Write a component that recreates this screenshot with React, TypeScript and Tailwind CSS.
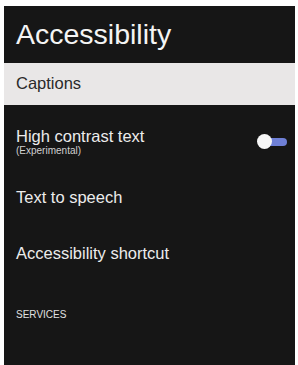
import React from "react";

const ROWS = ["Text to speech", "Accessibility shortcut"];

function Toggle() {
  return (
    <div className="relative h-[15px] w-[30px] shrink-0">
      <div className="absolute left-[6px] top-[4px] h-[8px] w-[24px] rounded-full bg-[#6f80d6]" />
      <div className="absolute left-0 top-0 h-[15px] w-[15px] rounded-full bg-[#f7f7f7]" />
    </div>
  );
}

export default function App() {
  return (
    <div
      className="h-[365px] w-[298px] bg-white pl-[4px] pr-[3px] pt-[6px]"
      style={{ fontFamily: '"Liberation Sans", Arial, sans-serif' }}
    >
      <div className="flex h-full flex-col bg-[#161616] text-[#ececec]">
        {/* Title bar */}
        <header className="flex h-[57px] items-center px-[12px]">
          <h1 className="text-[28.5px] leading-none text-[#f4f4f4]">Accessibility</h1>
        </header>

        {/* Selected row */}
        <div className="flex h-[42px] items-center bg-[#e9e7e7] px-[12px] pb-[2px]">
          <span className="text-[16.5px] leading-none text-[#2a2a2a]">Captions</span>
        </div>

        <ul className="pt-[9px]">
          <li className="flex h-[55.5px] items-center justify-between pl-[12px] pr-[8px]">
            <div className="flex flex-col">
              <span className="text-[16.5px] leading-[18px]">High contrast text</span>
              <span className="text-[10px] leading-[11px] text-[#d0d0d0]">(Experimental)</span>
            </div>
            <Toggle />
          </li>
          {ROWS.map((r) => (
            <li key={r} className="flex h-[55.5px] items-center px-[12px]">
              <span className="text-[16.5px] leading-none">{r}</span>
            </li>
          ))}
        </ul>

        <h2 className="mt-[29px] px-[12px] text-[10px] leading-none text-[#e0e0e0]">SERVICES</h2>
      </div>
    </div>
  );
}
